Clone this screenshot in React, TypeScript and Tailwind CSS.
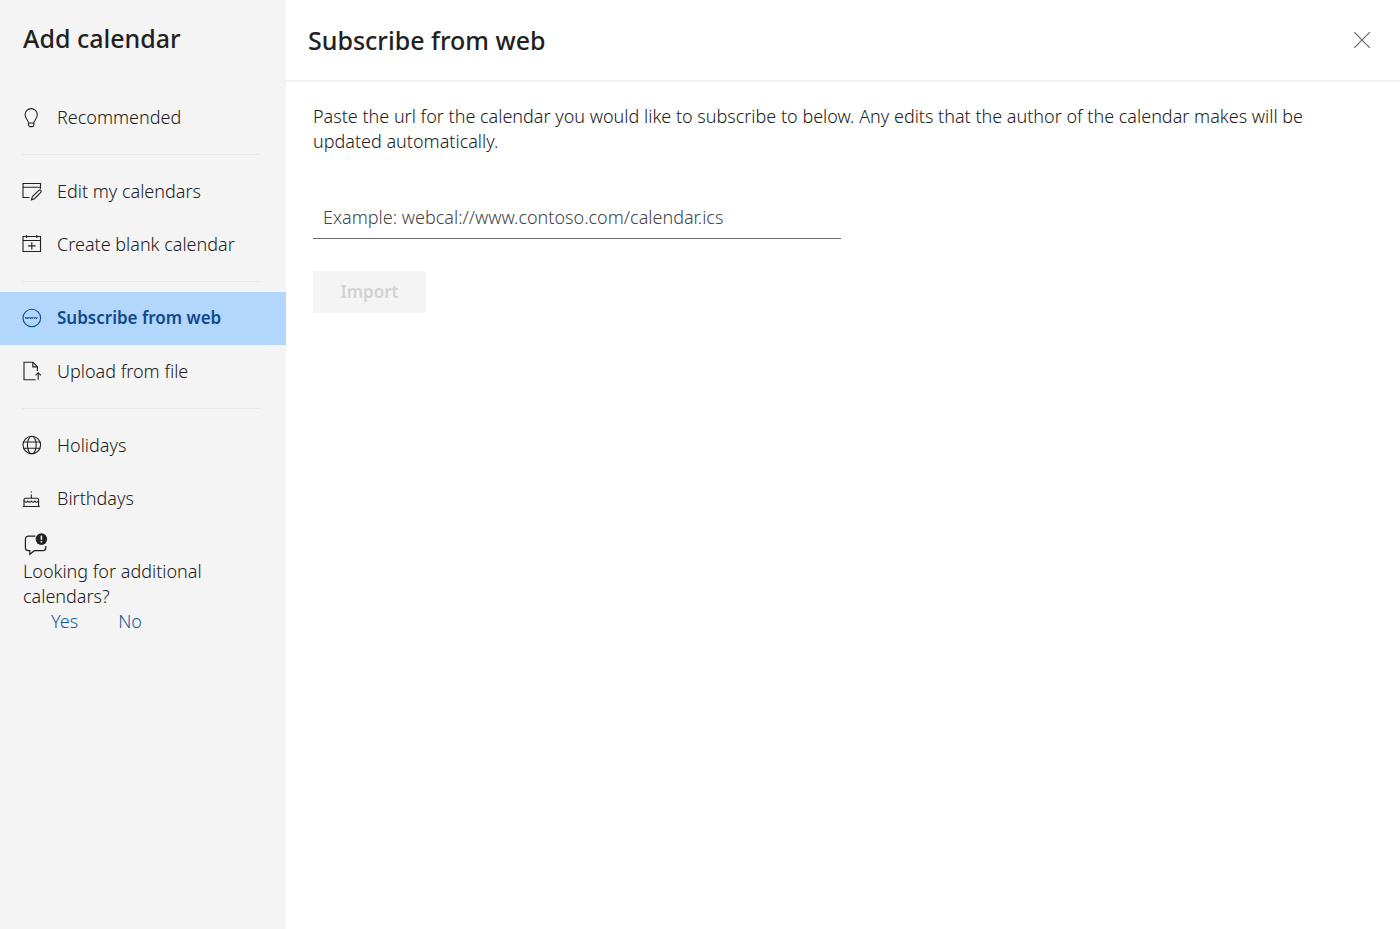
import React from "react";

const iconProps = {
  width: 20,
  height: 20,
  viewBox: "0 0 20 20",
  fill: "none",
  stroke: "currentColor",
  strokeWidth: 1.1,
  "aria-hidden": true,
  className: "overflow-visible",
};

const BulbIcon = () => (
  <svg {...iconProps}>
    <path d="M6.6 15c0-2.4-3.5-4.2-3.5-8.3a6.1 6.1 0 0 1 12.2 0c0 4.1-3.5 5.9-3.5 8.3z" />
    <path d="M6.6 15v2.1c0 .9.6 1.5 1.5 1.5h2.2c.9 0 1.5-.6 1.5-1.5V15" />
  </svg>
);

const EditCalendarIcon = () => (
  <svg {...iconProps}>
    <path d="M7.5 15.5H1V1.5h17.5v5.2M1 5.2h17.5" />
    <path d="M9.4 17.8l1-3.2 6.4-6.3a1.4 1.4 0 0 1 2 2l-6.3 6.4z" />
  </svg>
);

const AddCalendarIcon = () => (
  <svg {...iconProps}>
    <path d="M1 1.5h17.5v15H1zM1 5.5h17.5M4.6 0v3M14.8 0v3M9.8 7.2v7.4M6 10.9h7.6" />
  </svg>
);

const WebIcon = () => (
  <svg {...iconProps}>
    <circle cx="9.8" cy="9" r="8.8" />
    <path d="M3.3 7.9l.8 2 .9-1.7.9 1.7.8-2M7.5 7.9l.8 2 .9-1.7.9 1.7.8-2M11.9 7.9l.8 2 .9-1.7.9 1.7.8-2" strokeWidth="0.9" />
  </svg>
);

const UploadIcon = () => (
  <svg {...iconProps}>
    <path d="M13.6 17.7H2V.3h9l4.4 4.4v4.2M10.8.3v4.6h4.6" />
    <path d="M16.2 17.8v-6.6M13.6 13.3l2.6-2.6 2.6 2.6" />
  </svg>
);

const GlobeIcon = () => (
  <svg {...iconProps}>
    <circle cx="9.8" cy="9" r="8.8" />
    <ellipse cx="9.8" cy="9" rx="4.4" ry="8.8" />
    <path d="M1.6 6h16.4M1.6 12.2h16.4" />
  </svg>
);

const CakeIcon = () => (
  <svg {...iconProps}>
    <path d="M.8 17.5h17M2 17.5v-6.9c0-.8.5-1.3 1.3-1.3h12c.8 0 1.3.5 1.3 1.3v6.9" />
    <path d="M2 11.8c1.2 1.8 2.6 1.8 3.7.3 1.2 1.4 2.4 1.4 3.6 0 1.2 1.4 2.4 1.4 3.6 0 1.1 1.5 2.5 1.5 3.7-.3M9.3 9.3V5.4M9.3 2.2v1.4" />
  </svg>
);

const FeedbackIcon = () => (
  <svg width="26" height="26" viewBox="0 0 26 26" fill="none" stroke="currentColor" strokeWidth="1.2" aria-hidden>
    <path d="M12.4 3.1H5.4a3 3 0 0 0-3 3v8.6a3 3 0 0 0 3 3h1.4v3.6l4.6-3.6h8.4a3 3 0 0 0 3-3V13" />
    <circle cx="18.4" cy="6.1" r="5.8" fill="currentColor" stroke="none" />
    <path d="M18.4 2.6v4.2" stroke="#f4f4f4" strokeWidth="1.6" />
    <path d="M18.4 7.9v1.6" stroke="#f4f4f4" strokeWidth="1.6" />
  </svg>
);

const navGroups = [
  [{ label: "Recommended", Icon: BulbIcon }],
  [
    { label: "Edit my calendars", Icon: EditCalendarIcon },
    { label: "Create blank calendar", Icon: AddCalendarIcon },
  ],
  [
    { label: "Subscribe from web", Icon: WebIcon },
    { label: "Upload from file", Icon: UploadIcon },
  ],
  [
    { label: "Holidays", Icon: GlobeIcon },
    { label: "Birthdays", Icon: CakeIcon },
  ],
];

const Sidebar: React.FC<{ active: string; onSelect: (label: string) => void }> = ({ active, onSelect }) => {
  return (
    <aside className="w-[286px] shrink-0 bg-[#f4f4f4]">
      <h1 className="px-[23px] pt-5 pb-[35px] text-[25px] leading-9 font-medium">Add calendar</h1>
      <nav>
        {navGroups.map((group, i) => (
          <div key={i}>
            {i > 0 && <hr className="my-[10px] mr-[26px] ml-[22px] border-[#e8e8e8]" />}
            {group.map(({ label, Icon }) => (
              <button
                key={label}
                onClick={() => onSelect(label)}
                className={`flex h-[53px] w-full items-center gap-[15px] px-[22px] text-left ${active === label ? "bg-[#b3d6fc] text-[17px] font-semibold text-[#0f4a8a]" : ""}`}
              >
                <Icon />
                <span className="pb-px">{label}</span>
              </button>
            ))}
          </div>
        ))}
      </nav>
      <div className="px-[23px] pt-2">
        <FeedbackIcon />
        <p className="leading-[25px]">Looking for additional calendars?</p>
        <div className="flex gap-10 px-7 leading-[25px] font-normal text-[#1556a0]">
          <button className="font-light">Yes</button>
          <button className="font-light">No</button>
        </div>
      </div>
    </aside>
  );
};

const App: React.FC = () => {
  const [active, setActive] = React.useState("Subscribe from web");
  const [url, setUrl] = React.useState("");

  return (
    <div className="flex min-h-screen bg-white font-['Noto_Sans','Open_Sans',sans-serif] text-lg font-light text-[#212121]">
      <Sidebar active={active} onSelect={setActive} />

      <main className="min-w-0 flex-1">
        {/* Header */}
        <header className="flex h-[82px] items-center justify-between border-b-2 border-[#f2f2f2] pr-[29px] pb-px pl-[22px]">
          <h2 className="text-[25px] leading-9 font-medium">Subscribe from web</h2>
          <button aria-label="Close" className="text-[#666]">
            <svg width="18" height="18" viewBox="0 0 18 18" stroke="currentColor" strokeWidth="1.2" aria-hidden>
              <path d="M1.2 1.2l15.6 15.6M16.8 1.2L1.2 16.8" />
            </svg>
          </button>
        </header>

        <form className="px-[27px] pt-[22px]" onSubmit={(e) => e.preventDefault()}>
          <label htmlFor="calendar-url" className="block max-w-[1030px] leading-[25px]">
            Paste the url for the calendar you would like to subscribe to below. Any edits that the author of the calendar makes will be updated automatically.
          </label>
          <input
            id="calendar-url"
            type="text"
            value={url}
            onChange={(e) => setUrl(e.target.value)}
            placeholder="Example: webcal://www.contoso.com/calendar.ics"
            className="mt-[43px] block h-[42px] w-full max-w-[528px] border-b border-[#6a6a6a] px-[10px] pb-0.5 outline-none placeholder:text-[#444]"
          />
          <button type="submit" disabled={!url} className="mt-8 h-[42px] w-[113px] rounded-xs bg-[#f4f4f4] text-[17px] font-semibold disabled:text-[#d2d2d2]">
            Import
          </button>
        </form>
      </main>
    </div>
  );
};

export default App;
